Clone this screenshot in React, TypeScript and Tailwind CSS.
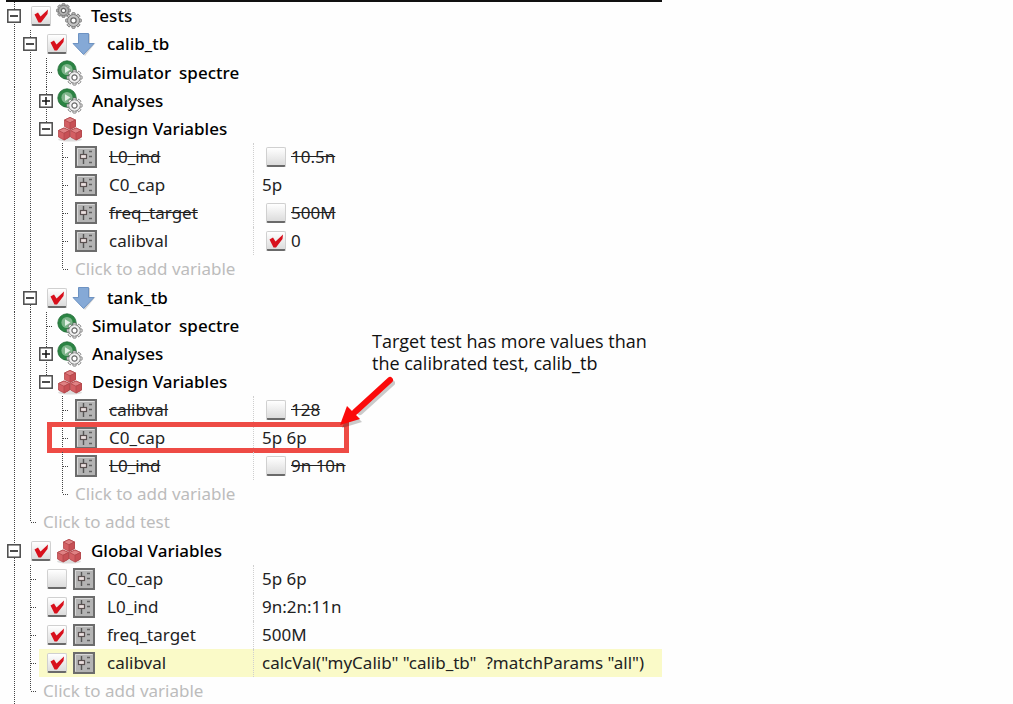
import { ReactNode, useState } from 'react';

type IconKind = 'gears' | 'arrow' | 'run' | 'cubes' | 'slider';
type Guide = 'line' | 'tee' | 'end' | 'none' | 'open' | 'closed' | 'lastOpen';

interface Row {
  guides: Guide[];
  label: string;
  icon?: IconKind;
  checked?: boolean;
  value?: string;
  valueChecked?: boolean;
  detail?: string;
  heading?: boolean;
  struck?: boolean;
  highlighted?: boolean;
  tall?: boolean;
  note?: boolean;
}

const testRows = (name: string, tallName: boolean, vars: Row[]): Row[] => [
  { guides: ['line', 'open'], label: name, icon: 'arrow', checked: true, heading: true, tall: tallName },
  { guides: ['line', 'line', 'tee'], label: 'Simulator', detail: 'spectre', icon: 'run', heading: true, tall: !tallName },
  { guides: ['line', 'line', 'closed'], label: 'Analyses', icon: 'run', heading: true },
  { guides: ['line', 'line', 'lastOpen'], label: 'Design Variables', icon: 'cubes', heading: true },
  ...vars,
  { guides: ['line', 'line', 'none', 'end'], label: 'Click to add variable' },
];

const nested: Guide[] = ['line', 'line', 'none', 'tee'];
const global: Guide[] = ['line', 'tee'];

const rows: Row[] = [
  { guides: ['open'], label: 'Tests', icon: 'gears', checked: true, heading: true },
  ...testRows('calib_tb', false, [
    { guides: nested, label: 'L0_ind', icon: 'slider', value: '10.5n', valueChecked: false, struck: true },
    { guides: nested, label: 'C0_cap', icon: 'slider', value: '5p' },
    { guides: nested, label: 'freq_target', icon: 'slider', value: '500M', valueChecked: false, struck: true },
    { guides: nested, label: 'calibval', icon: 'slider', value: '0', valueChecked: true },
  ]),
  ...testRows('tank_tb', true, [
    { guides: nested, label: 'calibval', icon: 'slider', value: '128', valueChecked: false, struck: true },
    { guides: nested, label: 'C0_cap', icon: 'slider', value: '5p 6p', note: true },
    { guides: nested, label: 'L0_ind', icon: 'slider', value: '9n 10n', valueChecked: false, struck: true },
  ]),
  { guides: ['line', 'end'], label: 'Click to add test' },
  { guides: ['open'], label: 'Global Variables', icon: 'cubes', checked: true, heading: true, tall: true },
  { guides: global, label: 'C0_cap', icon: 'slider', checked: false, value: '5p 6p' },
  { guides: global, label: 'L0_ind', icon: 'slider', checked: true, value: '9n:2n:11n' },
  { guides: global, label: 'freq_target', icon: 'slider', checked: true, value: '500M' },
  {
    guides: global,
    label: 'calibval',
    icon: 'slider',
    checked: true,
    value: 'calcVal("myCalib" "calib_tb"  ?matchParams "all")',
    highlighted: true,
  },
  { guides: ['line', 'end'], label: 'Click to add variable' },
];

function Gear({ cx, cy, r, fill }: { cx: number; cy: number; r: number; fill: string }) {
  const teeth = [0, 45, 90, 135, 180, 225, 270, 315];
  return (
    <g transform={`translate(${cx} ${cy})`}>
      {teeth.map((a) => (
        <rect key={a} x={-1.6} y={-r - 2} width={3.2} height={4} rx={0.6} fill={fill} stroke="#666" strokeWidth={0.8} transform={`rotate(${a})`} />
      ))}
      <circle r={r} fill={fill} stroke="#666" strokeWidth={0.8} />
      <circle r={r - 0.5} fill={fill} />
      <circle r={r * 0.46} fill="#fff" stroke="#666" strokeWidth={1.2} />
    </g>
  );
}

function Cube({ x, y }: { x: number; y: number }) {
  return (
    <g transform={`translate(${x} ${y})`} stroke="#b2474b" strokeWidth={0.8} strokeLinejoin="round">
      <path d="M6 0.5 11.5 3 11.5 9.5 6 12.5 0.5 9.5 0.5 3Z" fill="#d35f63" />
      <path d="M6 0.5 11.5 3 6 5.8 0.5 3Z" fill="#df8183" />
      <path d="M6 5.8 11.5 3 11.5 9.5 6 12.5Z" fill="#c75055" />
    </g>
  );
}

function Icon({ kind }: { kind: IconKind }) {
  switch (kind) {
    case 'gears':
      return (
        <svg width="26" height="26" viewBox="0 0 26 26" aria-hidden="true">
          <Gear cx={7.5} cy={7.5} r={4.8} fill="#b4b4b4" />
          <Gear cx={17.5} cy={17.5} r={5.8} fill="#c4c4c4" />
        </svg>
      );
    case 'run':
      return (
        <svg width="26" height="26" viewBox="0 0 26 26" aria-hidden="true">
          <circle cx="10" cy="10" r="9.2" fill="#2b8443" stroke="#1f6b35" strokeWidth="0.8" />
          <circle cx="10" cy="9.5" r="5.6" fill="#7fb58b" />
          <path d="M8 6.2 13.4 9.6 8 13Z" fill="#e4f1e6" />
          <Gear cx={17.5} cy={17.5} r={5.6} fill="#f0f0f0" />
        </svg>
      );
    case 'arrow':
      return (
        <svg width="26" height="26" viewBox="0 0 26 26" aria-hidden="true">
          <path d="M8 3H19V12H24.5L14 25 3 12H8Z" fill="#9a9a9a" opacity="0.4" />
          <path d="M7.5 2.5H17.5V12.500H23L12.5 23.5 2 12.500H7.5Z" fill="#85a9d6" stroke="#6d92c2" strokeWidth="1" strokeLinejoin="round" />
        </svg>
      );
    case 'cubes':
      return (
        <svg width="26" height="26" viewBox="0 0 26 26" aria-hidden="true">
          <ellipse cx="13" cy="23.500" rx="12" ry="2" fill="#bbb" opacity="0.5" />
          <Cube x={7} y={1} />
          <Cube x={1} y={11.5} />
          <Cube x={13} y={11.5} />
        </svg>
      );
    case 'slider':
      return (
        <svg width="22" height="22" viewBox="0 0 22 22" aria-hidden="true">
          <rect x="1" y="1" width="20" height="20" fill="#b4b4b4" stroke="#6c6c6c" strokeWidth="2" />
          <path d="M2.5 19.5V2.5H19.5" fill="none" stroke="#d8d8d8" />
          <path d="M8.5 4V18" stroke="#555" strokeWidth="1.4" />
          <rect x="5.5" y="8.5" width="6" height="4" fill="#eadfdf" stroke="#5a5050" strokeWidth="1.2" />
          <path d="M14 5.5H17M14 10.5H17M14 16.5H17" stroke="#606060" strokeWidth="1.3" />
        </svg>
      );
  }
}

const STACK = '[grid-area:1/1]';
const DOTS_V = 'bg-[repeating-linear-gradient(to_bottom,#444_0_1px,transparent_1px_2px)]';
const DOTS_H = 'bg-[repeating-linear-gradient(to_right,#444_0_1px,transparent_1px_2px)]';

function GuideCell({ guide, label }: { guide: Guide; label: string }) {
  const half = guide === 'end' || guide === 'lastOpen';
  const box = guide === 'open' || guide === 'closed' || guide === 'lastOpen';
  const [open, setOpen] = useState(guide !== 'closed');
  return (
    <span className="grid w-4 shrink-0 grid-rows-[100%]">
      {guide !== 'none' && <span className={`${STACK} ml-[7px] w-px ${half ? 'h-1/2' : 'h-full'} ${DOTS_V}`} />}
      {(guide === 'tee' || guide === 'end') && <span className={`${STACK} ml-2 h-px w-1.5 self-center ${DOTS_H}`} />}
      {box && (
        <button
          type="button"
          aria-label={`Toggle ${label}`}
          aria-expanded={open}
          onClick={() => setOpen(!open)}
          className={`${STACK} size-[14px] self-center bg-white`}
        >
          <svg width="14" height="14" viewBox="0 0 14 14" aria-hidden="true">
            <rect x="0.8" y="0.8" width="12.4" height="12.4" fill="none" stroke="#4a4a4a" strokeWidth="1.5" />
            <path d={open ? 'M3 7H11' : 'M3 7H11M7 3V11'} stroke="#111" strokeWidth="1.5" />
          </svg>
        </button>
      )}
    </span>
  );
}

function Check({ initial, label }: { initial: boolean; label: string }) {
  const [on, setOn] = useState(initial);
  return (
    <span className="grid shrink-0">
      <input
        type="checkbox"
        checked={on}
        onChange={(e) => setOn(e.target.checked)}
        aria-label={label}
        className={`${STACK} size-5 appearance-none rounded-xs border border-[#d0d0d0] border-b-2 border-b-[#6a6a6a] bg-linear-to-b from-white to-[#dcdcdc]`}
      />
      {on && (
        <svg className={`${STACK} pointer-events-none size-5`} viewBox="0 0 20 20" aria-hidden="true">
          <path d="M3.500 8.500 7 6.5 9.500 10.5 17 3.500 16.5 8 10 16.5 7.5 16.5Z" fill="#d8101c" />
        </svg>
      )}
    </span>
  );
}

function Note() {
  return (
    <>
      <span className="pointer-events-none absolute -top-0.5 left-[47px] h-[31px] w-[302px] border-[5px] border-[#ee4b45]" />
      <svg className="pointer-events-none absolute -top-[50px] left-[336px]" width="64" height="64" viewBox="0 0 64 64" aria-hidden="true">
        <g transform="translate(2 3)" opacity="0.2">
          <path d="M54 6 22 35" stroke="#000" strokeWidth="6" strokeLinecap="round" />
          <path d="M4 51 11 32 24 45Z" />
        </g>
        <path d="M54 6 19 38" stroke="#fb0a0a" strokeWidth="6" strokeLinecap="round" />
        <path d="M4 51 11 32 24 45Z" fill="#fb0a0a" />
      </svg>
      <p className="absolute -top-[94px] left-[372px] w-[320px] font-['Open_Sans','Noto_Sans',sans-serif] text-[18px] leading-[22px] text-[#111]">
        Target test has more values than
        <br />
        the calibrated test, calib_tb
      </p>
    </>
  );
}

function iconGap(row: Row): string {
  if (row.icon === 'slider') return row.checked !== undefined ? 'pl-2 gap-1.5' : 'pl-1';
  if (row.checked === undefined) return 'pl-0.5';
  return row.icon === 'arrow' ? 'pl-2 gap-1' : 'pl-2 gap-[5px]';
}

function TreeRow({ row }: { row: Row }) {
  let name: ReactNode;
  if (!row.icon) {
    name = (
      <button type="button" className="pl-1 text-[#bcbcbc]">
        {row.label}
      </button>
    );
  } else {
    name = (
      <span className={`flex items-center ${iconGap(row)}`}>
        {row.checked !== undefined && <Check initial={row.checked} label={`Enable ${row.label}`} />}
        <Icon kind={row.icon} />
      </span>
    );
  }
  const weight = row.heading ? 'font-medium text-black' : 'text-[#222]';
  const textGap = row.icon === 'slider' ? 'ml-3' : row.icon === 'arrow' ? 'ml-2.5' : 'ml-[9px]';
  return (
    <li
      role="treeitem"
      aria-level={row.guides.length}
      className={`relative grid grid-cols-[246px_1fr] ${row.tall ? 'h-[29px]' : 'h-7'} pl-[7px]`}
    >
      <div className="flex">
        {row.guides.map((g, i) => (
          <GuideCell key={i} guide={g} label={row.label} />
        ))}
        <div className={`flex flex-1 items-center whitespace-nowrap ${row.highlighted ? 'bg-[#fafac8]' : ''}`}>
          {name}
          {row.icon && (
            <span className={`${textGap} ${weight} ${row.struck ? 'line-through' : ''}`}>{row.label}</span>
          )}
          {row.detail && <span className={`ml-2 ${weight}`}>{row.detail}</span>}
        </div>
      </div>
      {row.value !== undefined && (
        <div
          className={`flex items-center whitespace-pre border-l border-dotted border-[#cfcfcf] text-[#222] ${
            row.highlighted ? 'bg-[#fafac8]' : ''
          } ${row.valueChecked !== undefined ? 'gap-[5px] pl-3' : 'pl-2'}`}
        >
          {row.valueChecked !== undefined && <Check initial={row.valueChecked} label={`Use ${row.label} value`} />}
          <span className={row.struck ? 'line-through' : ''}>{row.value}</span>
        </div>
      )}
      {row.note && <Note />}
    </li>
  );
}

export default function App() {
  return (
    <main className="h-screen overflow-hidden bg-[#fefefe] font-['Noto_Sans','Open_Sans',sans-serif] text-[17px] leading-6">
      <section className="max-w-[662px]">
        <hr className="ml-1.5 border-t-2 border-[#111]" />
        <ul role="tree" aria-label="Tests and variables">
          {rows.map((row, i) => (
            <TreeRow key={i} row={row} />
          ))}
        </ul>
      </section>
    </main>
  );
}
